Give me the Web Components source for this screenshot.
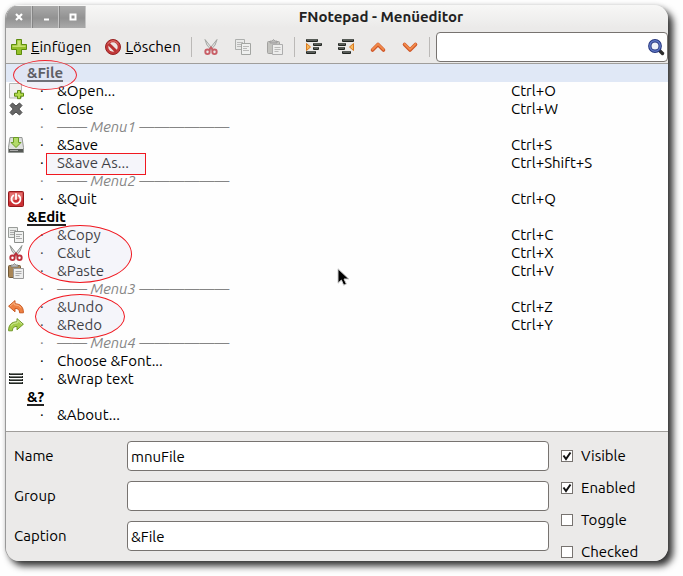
<!DOCTYPE html>
<html lang="de">
<head>
<meta charset="utf-8">
<title>FNotepad - Menüeditor</title>
<style>
  html, body { height: 100%; }
  body {
    margin: 0; box-sizing: border-box; padding: 5px 15px 15px 5px;
    background: #fefefe; color: #000; overflow: hidden;
    font: 15px/18px Ubuntu, "Noto Sans", "Open Sans", sans-serif;
  }
</style>
</head>
<body>
<app-window>
  <span slot="title">FNotepad - Menüeditor</span>
  <tool-bar slot="tools">
    <tool-button icon="add"><u>E</u>infügen</tool-button>
    <tool-button icon="forbid"><u>L</u>öschen</tool-button>
    <tool-separator></tool-separator>
    <tool-button icon="cut" label="Ausschneiden" dim></tool-button>
    <tool-button icon="copy" label="Kopieren" dim></tool-button>
    <tool-button icon="pastegrey" label="Einfügen aus Ablage" dim></tool-button>
    <tool-separator></tool-separator>
    <tool-button icon="indent" label="Einrücken"></tool-button>
    <tool-button icon="outdent" label="Ausrücken"></tool-button>
    <tool-button icon="up" label="Nach oben"></tool-button>
    <tool-button icon="down" label="Nach unten"></tool-button>
    <tool-separator></tool-separator>
    <search-box></search-box>
  </tool-bar>
  <menu-tree></menu-tree>
  <property-panel slot="panel">
    <text-field label="Name" value="mnuFile"></text-field>
    <text-field label="Group" value=""></text-field>
    <text-field label="Caption" value="&amp;File"></text-field>
    <check-field slot="checks" checked>Visible</check-field>
    <check-field slot="checks" checked>Enabled</check-field>
    <check-field slot="checks">Toggle</check-field>
    <check-field slot="checks">Checked</check-field>
  </property-panel>
</app-window>

<script>
const pages = (back, front) => `
  <path d="M.5 .5h9v10h-9z" fill="${back}" stroke="#999c99"/><path d="M2 3.500h6M2 5.500h4M2 7.500h4" stroke="#aaa"/>
  <path d="M6.500 4.500h9v11h-9z" fill="${front}" stroke="#8b8e8b"/><path d="M8 7.500h6M8 9.500h4M8 11.500h6" stroke="#aaa"/>`;
const board = (fill, edge, clip) => `
  <rect x=".5" y="2.500" width="12" height="12" rx="1" fill="${fill}" stroke="${edge}"/>
  <path d="M3 4V2h2q1.500-3 3 0h2v2z" fill="${clip}" stroke="#777" stroke-width=".7"/>
  <path d="M5.500 5.500h10v10h-10z" fill="#eee" stroke="#999"/><path d="M7.500 8.500h6M7.500 10.500h6M7.500 12.500h4" stroke="#aaa"/>`;
const bars = (xs) => xs.map(([x, y, w]) =>
  `<rect x="${x}" y="${y}" width="${w}" height="3" rx="1" fill="#222622"/><path d="M${x + 1} ${y + 1}h${w - 2}" stroke="#8b908b" stroke-width="1"/>`).join('');
const undoArrow = 'M.6 7.200 7 1.600v3.200c5.500 0 8.500 3.200 8.400 9h-3.800c0-3-1.500-4.400-4.600-4.400v3.400z';

const ICONS = {
  add: `<path d="M5.500.5h5v5h5v5h-5v5h-5v-5h-5v-5h5z" fill="#95c02a" stroke="#5d8c0c" stroke-linejoin="round"/><path d="M6.500 6.500v-5h3v5h5v1.500h-13v-1.500z" fill="#c6e070"/>`,
  forbid: `<circle cx="8" cy="8" r="7.500" fill="#c33b3b" stroke="#972222"/><circle cx="8" cy="8" r="4.700" fill="#eee5e3"/><path d="m3.800 5 7.400 7.400" stroke="#b93131" stroke-width="3"/><path d="M2.500 5Q8-1.500 13.500 5" fill="none" stroke="#df7770"/>`,
  cut: `<path d="M2 .5 10 10.500l-1.500.8Q2.500 6 2 .5zM14 .5 6 10.500l1.500.8Q13.500 6 14 .5z" fill="#ddd" stroke="#858985" stroke-width=".9"/><g fill="none" stroke="#bd303b" stroke-width="1.900"><ellipse cx="4.500" cy="12.800" rx="2.200" ry="2.300"/><ellipse cx="11.500" cy="12.800" rx="2.200" ry="2.300"/><path d="m6 11 2-2.400 2 2.400"/></g>`,
  copy: pages('#e9ebe9', '#f1f2f1'),
  paste: board('#a98657', '#725a38', '#bbb'),
  pastegrey: board('#b6b6b2', '#8b8b88', '#aaa'),
  indent: bars([[0, 0, 12], [7, 4, 9], [7, 8, 6], [0, 12, 10]]) + `<path d="m.5 4.500 4 3.500-4 3.500z" fill="#f7b95c" stroke="#d97a20"/>`,
  outdent: bars([[4, 0, 12], [0, 4, 8], [0, 8, 7], [4, 12, 9]]) + `<path d="m15.500 4.500-4 3.500 4 3.500z" fill="#f7b95c" stroke="#d97a20"/>`,
  up: `<g fill="none" stroke-linecap="round" stroke-linejoin="round"><path d="m2.500 11 5.500-5.500 5.500 5.500" stroke="#cf5526" stroke-width="3.600"/><path d="m2.500 10.500 5.500-5.500 5.500 5.500" stroke="#f08a4b" stroke-width="1.800"/></g>`,
  down: `<g fill="none" stroke-linecap="round" stroke-linejoin="round"><path d="m2.500 5.500 5.500 5.500 5.500-5.500" stroke="#cf5526" stroke-width="3.600"/><path d="m2.500 5 5.500 5.500 5.500-5.500" stroke="#f08a4b" stroke-width="1.800"/></g>`,
  search: `<path d="m11.500 11.500 3 3" stroke="#2c2c2c" stroke-width="3.400" stroke-linecap="round"/><circle cx="7" cy="7" r="5.200" fill="#eef1f8" stroke="#25357e" stroke-width="3.400"/><circle cx="7" cy="7" r="5.200" fill="none" stroke="#5f78c4" stroke-width="1.500"/>`,
  open: `<path d="M1.500.5h12v14.500h-12z" fill="#f0f0ef" stroke="#b5b5b3"/><path d="M9.500 7.500h3v2.700h3v3h-3v2.500h-3v-2.500h-3v-3h3z" fill="#b4dc4b" stroke="#5c8a10"/>`,
  close: `<path d="m2 4.500 2.500-2.500 3.500 3 3.500-3L14 4.500 10.800 8l3.200 3.500-2.500 2.500L8 11l-3.500 3L2 11.500 5.200 8z" fill="#666" stroke="#494949"/>`,
  save: `<path d="M2 .5h12l1.500 10v5H.5v-5z" fill="#dfe1de" stroke="#959895"/><path d="M1 12h14v3H1z" fill="#555955"/><path d="M2 13.500h8" stroke="#aaa"/><path d="M5.500.5h5v5H13L8 10.500 3 5.500h2.500z" fill="#b3da6a" stroke="#6a9c24"/>`,
  quit: `<rect x=".5" y=".5" width="15" height="15" rx="1" fill="#cb3034" stroke="#94191c"/><path d="M1.500 1.500h13v5q-6 2-13 4z" fill="#e2706e"/><path d="M5.300 4.500a4.500 4.500 0 1 0 5.400 0M8 3v5" fill="none" stroke="#fff" stroke-width="1.800" stroke-linecap="round"/>`,
  undo: `<path d="${undoArrow}" fill="#ee8042" stroke="#ca5a22" stroke-linejoin="round"/><path d="M2 7.200 6.200 3.500v2.200q5 0 7 3" fill="none" stroke="#f9b585"/>`,
  redo: `<g transform="matrix(-1 0 0 1 16 0)"><path d="${undoArrow}" fill="#a4cc4a" stroke="#72992a" stroke-linejoin="round"/><path d="M2 7.200 6.200 3.500v2.200q5 0 7 3" fill="none" stroke="#d2e99a"/></g>`,
  wrap: `<path d="M1 3h14M1 6h14M1 9h14M1 12h14" stroke="#222622" stroke-width="2"/><path d="M2 2.500h12M2 5.500h12M2 8.500h12M2 11.500h12" stroke="#7b807b"/>`,
  winclose: `<path d="m5 5 6 6m0-6-6 6" stroke="#fff" stroke-width="2.200"/>`,
  winmin: `<path d="M6 10.500h5" stroke="#fff" stroke-width="2"/>`,
  winmax: `<path d="M5.500 5.500h5v5h-5z" fill="none" stroke="#fff" stroke-width="2"/>`,
  pointer: `<path d="M1 .8v14.400l3.400-3.200 2.300 5.200 2.700-1.200-2.400-5h4.800z" fill="#000" stroke="#ccc"/>`
};
const svg = (name, box = '0 0 16 16') => `<svg viewBox="${box}" aria-hidden="true">${ICONS[name]}</svg>`;

class Base extends HTMLElement {
  connectedCallback() {
    if (this.shadowRoot) return;
    this.attachShadow({ mode: 'open' }).innerHTML = this.render();
  }
}

class UiIcon extends Base {
  render() {
    return `<style>:host{display:block;width:16px;height:16px;flex:none}svg{display:block;width:100%;height:100%;overflow:visible}</style>${svg(this.getAttribute('name'))}`;
  }
}

class AppWindow extends Base {
  render() {
    return `<style>
      :host{display:flex;flex-direction:column;height:100%;box-sizing:border-box;overflow:hidden;
        border-left:1px solid #999;border-radius:14px;background:#ebeae9;box-shadow:5px 5px 7px #333, 0 0 5px #ddd}
      header{display:grid;grid-template-columns:80px 1fr;align-items:center;height:23px;flex:none;
        background:linear-gradient(#f7f7f6,#ebeae9)}
      nav{display:flex;height:23px;box-sizing:border-box;background:linear-gradient(#aaa,#929292 55%,#aaa);border-radius:0 0 3px 0;border-bottom:1px solid #858585}
      button{flex:1;border:0;border-right:1px solid #c5c5c5;padding:0;background:none;display:grid;place-items:center}
      button+button{border-left:1px solid #858585}
      h1{margin:0;font-size:15px;line-height:24px;font-weight:700;text-align:center;color:#222;padding-left:8px}
      main{flex:1 0 auto;background:#fefefe;border-top:1px solid #a09e9b;border-bottom:1px solid #a09e9b;padding-bottom:7px}
    </style>
    <header><nav>
      <button aria-label="Schließen"><ui-icon name="winclose"></ui-icon></button>
      <button aria-label="Minimieren"><ui-icon name="winmin"></ui-icon></button>
      <button aria-label="Maximieren"><ui-icon name="winmax"></ui-icon></button>
    </nav><h1><slot name="title"></slot></h1></header>
    <slot name="tools"></slot><main><slot></slot></main><slot name="panel"></slot>`;
  }
}

class ToolBar extends Base {
  render() {
    return `<style>:host{display:flex;align-items:center;gap:6px;height:35px;box-sizing:border-box;flex:none;padding:3px 0 0 1px;background:#ebeae9}</style><slot></slot>`;
  }
}

class ToolButton extends Base {
  render() {
    const label = this.getAttribute('label');
    return `<style>:host{display:block;flex:none}
      button{display:flex;align-items:center;gap:4px;border:0;margin:0;padding:4px ${label ? 5 : 4}px;background:none;font:inherit;color:inherit}
      :host([dim]) ui-icon{opacity:.75}</style>
      <button${label ? ` aria-label="${label}"` : ''}><ui-icon name="${this.getAttribute('icon')}"></ui-icon>${label ? '' : '<span><slot></slot></span>'}</button>`;
  }
}

class ToolSeparator extends Base {
  render() { return `<style>:host{display:block;width:1px;height:20px;background:#bbb9b7;flex:none}</style>`; }
}

class SearchBox extends Base {
  render() {
    return `<style>
      :host{display:flex;flex:1;min-width:0;height:30px;box-sizing:border-box;align-items:center;gap:4px;padding-right:3px;
        background:#fff;border:1px solid #777370;border-radius:4px}
      input{flex:1;min-width:0;border:0;outline:0;background:none;font:inherit;padding:0 4px}
      button{border:0;padding:0;background:none}</style>
      <input type="search" aria-label="Suchen"><button aria-label="Suche starten"><ui-icon name="search"></ui-icon></button>`;
  }
}

const ROWS = [
  ['top', '&File'], ['item', '&Open...', 'Ctrl+O', 'open'], ['item', 'Close', 'Ctrl+W', 'close'], ['sep', 'Menu1'],
  ['item', '&Save', 'Ctrl+S', 'save'], ['item', 'S&ave As...', 'Ctrl+Shift+S'], ['sep', 'Menu2'],
  ['item', '&Quit', 'Ctrl+Q', 'quit'], ['top', '&Edit'], ['item', '&Copy', 'Ctrl+C', 'copy'],
  ['item', 'C&ut', 'Ctrl+X', 'cut'], ['item', '&Paste', 'Ctrl+V', 'paste'], ['sep', 'Menu3'],
  ['item', '&Undo', 'Ctrl+Z', 'undo'], ['item', '&Redo', 'Ctrl+Y', 'redo'], ['sep', 'Menu4'],
  ['item', 'Choose &Font...'], ['item', '&Wrap text', '', 'wrap'], ['top', '&?'], ['item', '&About...']
];

class MenuTree extends Base {
  render() {
    const esc = (s) => s.replace(/&/g, '&amp;');
    const rows = ROWS.map(([kind, text, keys = '', icon], i) => {
      const caption = kind === 'top' ? `<b>${esc(text)}</b>`
        : `<i class="dot">·</i>${kind === 'sep' ? `<em>—— ${text} ——————</em>` : esc(text)}`;
      return `<tr class="${kind}${i ? '' : ' current'}"><td>${icon ? `<ui-icon name="${icon}"></ui-icon>` : ''}</td><td>${caption}</td><td>${keys}</td></tr>`;
    }).join('');
    return `<style>
      :host{display:block;position:relative}
      table{width:100%;border-collapse:collapse;table-layout:fixed}
      col.icon{width:21px} col.keys{width:157px}
      tr{height:18px} td{padding:0;height:18px;line-height:18px;white-space:nowrap}
      td:first-child{padding-left:2px}
      .current{background:#e0e8f6}
      b{display:inline-block;line-height:18px;height:16px;border-bottom:2px solid #222;vertical-align:top}
      .dot{display:inline-block;width:17px;padding-left:13px;font-style:normal}
      .sep{color:#858585}
      .mark{position:absolute;box-sizing:border-box;border:1px solid #f01820;background:rgba(223,221,241,.28);border-radius:50%;pointer-events:none}
      .file{left:7px;top:-4px;width:64px;height:30px;border-color:#ee2630;background:rgba(223,225,241,.42)}
      .saveas{left:40px;top:89px;width:100px;height:22px;border-radius:0}
      .clipboard{left:22px;top:161px;width:104px;height:58px}
      .history{left:29px;top:230px;width:90px;height:45px}
      .pointer{position:absolute;left:331px;top:204px;width:13px;height:19px}
    </style>
    <table aria-label="Menüeinträge"><colgroup><col class="icon"><col><col class="keys"></colgroup><tbody>${rows}</tbody></table>
    <div class="mark file"></div><div class="mark saveas"></div><div class="mark clipboard"></div><div class="mark history"></div>
    <div class="pointer">${svg('pointer', '0 0 13 19')}</div>`;
  }
}

class PropertyPanel extends Base {
  render() {
    return `<style>
      :host{display:grid;grid-template-columns:1fr 96px;gap:12px;flex:none;height:129px;padding:0 11px 0 8px;background:#ebeae9}
      .fields{display:flex;flex-direction:column;gap:10px;padding-top:9px}
      .checks{display:flex;flex-direction:column;gap:14px;padding-top:15px}</style>
      <div class="fields"><slot></slot></div><div class="checks"><slot name="checks"></slot></div>`;
  }
}

class TextField extends Base {
  render() {
    const value = this.getAttribute('value').replace(/&/g, '&amp;');
    return `<style>
      :host{display:grid;grid-template-columns:113px 1fr;align-items:center}
      input{box-sizing:border-box;width:100%;min-width:0;height:30px;margin:0;padding:0 3px;border:1px solid #777370;border-radius:4px;background:#fff;font:inherit;color:inherit}</style>
      <label for="f">${this.getAttribute('label')}</label><input id="f" type="text" value="${value}">`;
  }
}

class CheckField extends Base {
  render() {
    return `<style>
      :host{display:block}
      label{display:flex;align-items:center;gap:8px}
      span{display:grid;flex:none}
      input{grid-area:1/1;appearance:none;width:12px;height:12px;box-sizing:border-box;margin:0;border:1px solid #777370;background:#fff}
      svg{grid-area:1/1;width:12px;height:12px;pointer-events:none;visibility:hidden}
      input:checked+svg{visibility:visible}</style>
      <label><span><input type="checkbox"${this.hasAttribute('checked') ? ' checked' : ''}><svg viewBox="0 0 12 12" aria-hidden="true"><path d="m2.500 5.500 2.500 3.500 4.500-6.500" fill="none" stroke="#111" stroke-width="2"/></svg></span><slot></slot></label>`;
  }
}

customElements.define('ui-icon', UiIcon);
customElements.define('app-window', AppWindow);
customElements.define('tool-bar', ToolBar);
customElements.define('tool-button', ToolButton);
customElements.define('tool-separator', ToolSeparator);
customElements.define('search-box', SearchBox);
customElements.define('menu-tree', MenuTree);
customElements.define('property-panel', PropertyPanel);
customElements.define('text-field', TextField);
customElements.define('check-field', CheckField);
</script>
</body>
</html>
